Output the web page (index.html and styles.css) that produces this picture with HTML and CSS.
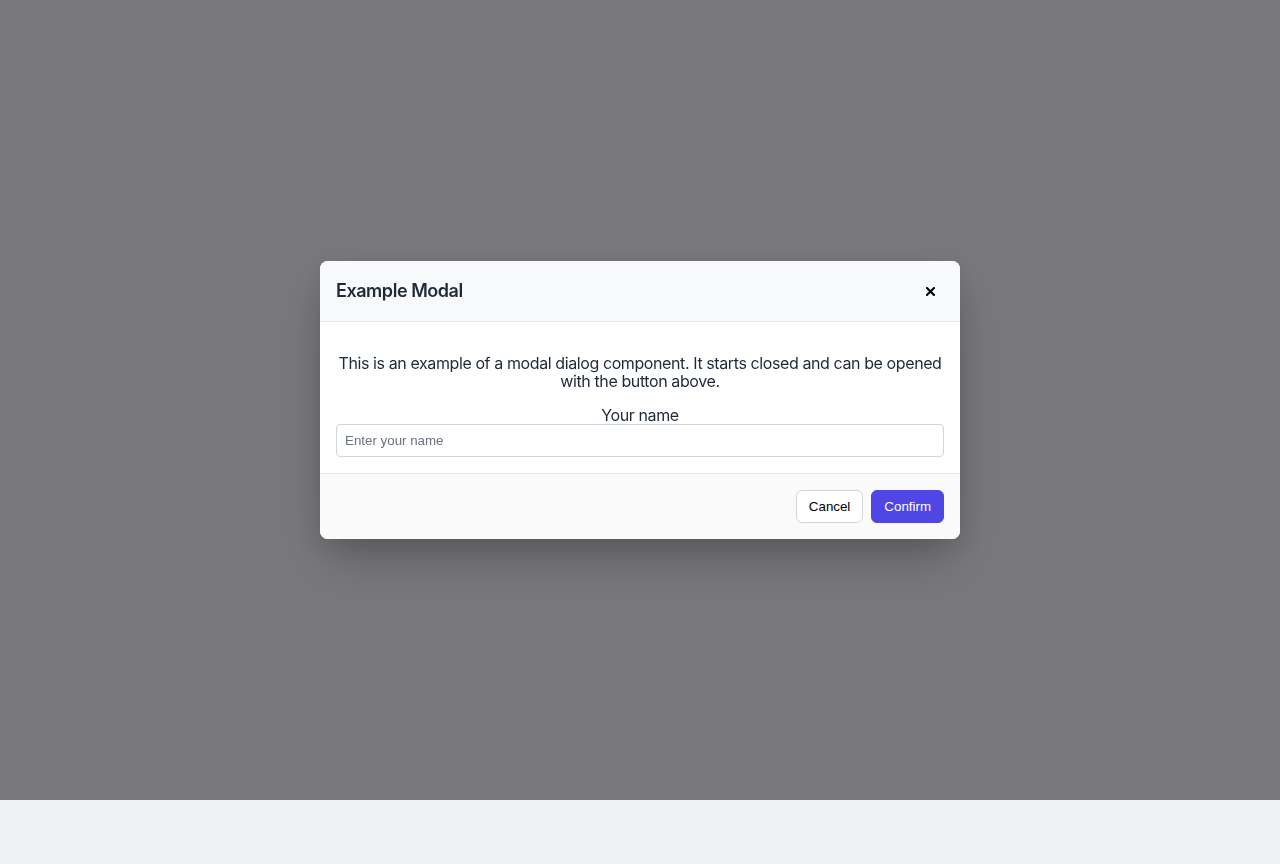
FILE: index.html
```html
<!DOCTYPE html>
<html lang="en">
<head>
  <meta charset="UTF-8" />
  <meta name="viewport" content="width=device-width, initial-scale=1.0" />
  <title>Modal Example</title>
  <link rel="stylesheet" href="styles.css">
</head>
<body>
  <div class="overlay">
    <div class="modal" role="dialog" aria-labelledby="modal-title">
      <div class="modal-header">
        <h2 id="modal-title">Example Modal</h2>
        <button class="close-btn" aria-label="Close">
          <svg width="9" height="9" viewBox="0 0 9 9">
            <path d="M1 1 L8 8 M8 1 L1 8" stroke="#000" stroke-width="2" stroke-linecap="square" />
          </svg>
        </button>
      </div>
      <div class="modal-body">
        <p>This is an example of a modal dialog component. It starts closed and can be opened with the button above.</p>
        <label for="name">Your name</label>
        <input type="text" id="name" placeholder="Enter your name" />
      </div>
      <div class="modal-footer">
        <button class="btn btn-secondary">Cancel</button>
        <button class="btn btn-primary">Confirm</button>
      </div>
    </div>
  </div>
</body>
</html>
```

FILE: styles.css
```css
body {
  margin: 0;
  background: #f0f1f5;
  font-family: Inter, 'Noto Sans', sans-serif;
  color: #1f2937;
  min-height: 864px;
}

.overlay {
  position: fixed;
  top: 0;
  left: 0;
  right: 0;
  height: 800px;
  background: rgba(0, 0, 0, 0.5);
  display: flex;
  align-items: center;
  justify-content: center;
}

.modal {
  width: 640px;
  background: #fff;
  border-radius: 8px;
  box-shadow: 0 25px 50px -12px rgba(0, 0, 0, 0.25), 0 10px 30px rgba(0, 0, 0, 0.12);
  overflow: hidden;
}

.modal-header {
  display: flex;
  align-items: center;
  justify-content: space-between;
  padding: 16px;
  background: #f8f9fb;
  border-bottom: 1px solid #e5e7eb;
}

.modal-header h2 {
  margin: 0;
  font-size: 18px;
  font-weight: 600;
  line-height: 28px;
  letter-spacing: -0.45px;
}

.close-btn {
  width: 28px;
  height: 28px;
  padding: 0;
  border: none;
  background: transparent;
  display: flex;
  align-items: center;
  justify-content: center;
  cursor: pointer;
}

.modal-body {
  padding: 16px;
  text-align: center;
  font-size: 16px;
  line-height: 18px;
  letter-spacing: -0.4px;
}

.modal-body p {
  margin: 16px 0;
}

.modal-body label {
  display: block;
}

.modal-body input {
  display: block;
  width: 100%;
  box-sizing: border-box;
  padding: 8px;
  border: 1px solid #d1d5db;
  border-radius: 4px;
  font-family: 'Liberation Sans', Arial, sans-serif;
  font-size: 13.33px;
  line-height: normal;
  letter-spacing: 0;
  color: #1f2937;
}

.modal-body input::placeholder {
  color: #6b7280;
}

.modal-footer {
  display: flex;
  justify-content: flex-end;
  gap: 8px;
  padding: 16px;
  background: #fafafa;
  border-top: 1px solid #e5e7eb;
}

.btn {
  padding: 8px 12px;
  border-radius: 6px;
  font-family: 'Liberation Sans', Arial, sans-serif;
  font-size: 13.33px;
  cursor: pointer;
}

.btn-secondary {
  background: #fff;
  color: #000;
  border: 1px solid #d1d5db;
}

.btn-primary {
  background: #4f46e5;
  color: #fff;
  border: 1px solid #4f46e5;
}
```
